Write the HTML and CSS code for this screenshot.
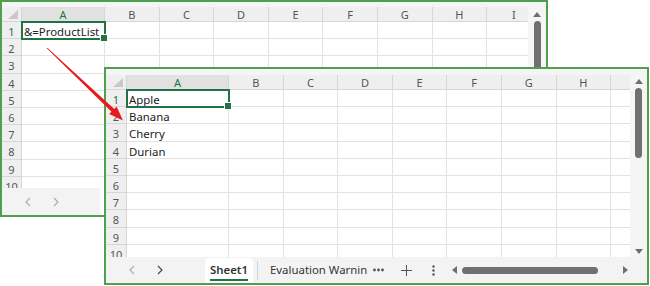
FILE: index.html
```html
<!DOCTYPE html>
<html lang="en">
<head>
    <meta charset="UTF-8">
    <meta name="viewport" content="width=device-width, initial-scale=1.0">
    <title>Product list template</title>
    <link rel="stylesheet" href="styles.css">
</head>
<body>
    <!-- template workbook -->
    <div class="win win-back">
        <div class="win-body">
            <div class="sheet">
                <div class="grid">
                    <div class="corner"><span class="tri"></span></div>
                    <div class="ch sel">A</div><div class="ch">B</div><div class="ch">C</div><div class="ch">D</div><div class="ch">E</div><div class="ch">F</div><div class="ch">G</div><div class="ch">H</div><div class="ch">I</div>
                    <div class="rh sel">1</div><div class="cell active">&amp;=ProductList</div><div></div><div></div><div></div><div></div><div></div><div></div><div></div><div></div>
                    <div class="rh">2</div><div></div><div></div><div></div><div></div><div></div><div></div><div></div><div></div><div></div>
                    <div class="rh">3</div><div></div><div></div><div></div><div></div><div></div><div></div><div></div><div></div><div></div>
                    <div class="rh">4</div><div></div><div></div><div></div><div></div><div></div><div></div><div></div><div></div><div></div>
                    <div class="rh">5</div><div></div><div></div><div></div><div></div><div></div><div></div><div></div><div></div><div></div>
                    <div class="rh">6</div><div></div><div></div><div></div><div></div><div></div><div></div><div></div><div></div><div></div>
                    <div class="rh">7</div><div></div><div></div><div></div><div></div><div></div><div></div><div></div><div></div><div></div>
                    <div class="rh">8</div><div></div><div></div><div></div><div></div><div></div><div></div><div></div><div></div><div></div>
                    <div class="rh">9</div><div></div><div></div><div></div><div></div><div></div><div></div><div></div><div></div><div></div>
                    <div class="rh">10</div><div></div><div></div><div></div><div></div><div></div><div></div><div></div><div></div><div></div>
                </div>
            </div>
            <div class="vscroll">
                <svg class="arr" width="8" height="5" viewBox="0 0 8 5"><polygon points="0,5 4,0 8,5"/></svg>
                <div class="vthumb"></div>
            </div>
        </div>
        <div class="tabbar">
            <div class="nav">
                <svg width="6" height="10" viewBox="0 0 6 10"><polyline points="5,1 1,5 5,9" class="chev off"/></svg>
                <svg width="6" height="10" viewBox="0 0 6 10"><polyline points="1,1 5,5 1,9" class="chev off"/></svg>
            </div>
            <div class="tab-blank"></div>
        </div>
    </div>

    <!-- generated result -->
    <div class="win win-front">
        <div class="win-body">
            <div class="sheet">
                <div class="grid">
                    <div class="corner"><span class="tri"></span></div>
                    <div class="ch sel">A</div><div class="ch">B</div><div class="ch">C</div><div class="ch">D</div><div class="ch">E</div><div class="ch">F</div><div class="ch">G</div><div class="ch">H</div><div class="ch"></div>
                    <div class="rh sel">1</div><div class="cell active">Apple</div><div></div><div></div><div></div><div></div><div></div><div></div><div></div><div></div>
                    <div class="rh">2</div><div class="cell">Banana</div><div></div><div></div><div></div><div></div><div></div><div></div><div></div><div></div>
                    <div class="rh">3</div><div class="cell">Cherry</div><div></div><div></div><div></div><div></div><div></div><div></div><div></div><div></div>
                    <div class="rh">4</div><div class="cell">Durian</div><div></div><div></div><div></div><div></div><div></div><div></div><div></div><div></div>
                    <div class="rh">5</div><div></div><div></div><div></div><div></div><div></div><div></div><div></div><div></div><div></div>
                    <div class="rh">6</div><div></div><div></div><div></div><div></div><div></div><div></div><div></div><div></div><div></div>
                    <div class="rh">7</div><div></div><div></div><div></div><div></div><div></div><div></div><div></div><div></div><div></div>
                    <div class="rh">8</div><div></div><div></div><div></div><div></div><div></div><div></div><div></div><div></div><div></div>
                    <div class="rh">9</div><div></div><div></div><div></div><div></div><div></div><div></div><div></div><div></div><div></div>
                    <div class="rh">10</div><div></div><div></div><div></div><div></div><div></div><div></div><div></div><div></div><div></div>
                </div>
            </div>
            <div class="vscroll">
                <svg class="arr" width="8" height="5" viewBox="0 0 8 5"><polygon points="0,5 4,0 8,5"/></svg>
                <div class="vthumb"></div>
                <div class="spacer"></div>
                <svg class="arr down" width="8" height="5" viewBox="0 0 8 5"><polygon points="0,0 8,0 4,5"/></svg>
            </div>
        </div>
        <div class="tabbar">
            <div class="nav">
                <svg width="6" height="10" viewBox="0 0 6 10"><polyline points="5,1 1,5 5,9" class="chev off"/></svg>
                <svg width="6" height="10" viewBox="0 0 6 10"><polyline points="1,1 5,5 1,9" class="chev"/></svg>
            </div>
            <div class="tab active-tab"><span>Sheet1</span></div>
            <div class="sep"></div>
            <div class="tab tab2">Evaluation Warnin</div>
            <div class="tool">
                <svg width="11" height="4" viewBox="0 0 11 4"><circle cx="1.5" cy="2" r="1.4"/><circle cx="5.5" cy="2" r="1.4"/><circle cx="9.5" cy="2" r="1.4"/></svg>
            </div>
            <div class="tool add">
                <svg width="11" height="11" viewBox="0 0 11 11"><path d="M5.5 0 V11 M0 5.5 H11" class="line"/></svg>
            </div>
            <div class="tool menu">
                <svg width="3" height="11" viewBox="0 0 3 11"><circle cx="1.5" cy="1.5" r="1.2"/><circle cx="1.5" cy="5.5" r="1.2"/><circle cx="1.5" cy="9.5" r="1.2"/></svg>
            </div>
            <div class="hscroll">
                <svg class="arr" width="5" height="8" viewBox="0 0 5 8"><polygon points="5,0 0,4 5,8"/></svg>
                <div class="hthumb"></div>
                <svg class="arr right" width="5" height="8" viewBox="0 0 5 8"><polygon points="0,0 5,4 0,8"/></svg>
            </div>
        </div>
    </div>

    <!-- pointer from the template cell to the result -->
    <svg class="pointer" width="650" height="286" viewBox="0 0 650 286">
        <polygon points="46.7,48.3 111.5,111.7 109.2,114.1 123,120.5 116.6,106.6 114.3,108.9 47.3,47.7"/>
    </svg>
</body>
</html>
```

FILE: styles.css
```css
* {
    box-sizing: border-box;
}
body {
    margin: 0;
    width: 650px;
    height: 286px;
    position: relative;
    overflow: hidden;
    background: #fff;
    font-family: "Noto Sans", "Open Sans", sans-serif;
    color: #222;
}

/* windows */
.win {
    position: absolute;
    display: flex;
    flex-direction: column;
    overflow: hidden;
    border: 2px solid #4f9f4f;
    background: #f5f5f5;
}
.win-back {
    left: 0;
    top: 0;
    width: 548px;
    height: 217px;
}
.win-front {
    left: 104px;
    top: 67px;
    width: 545px;
    height: 218px;
}
.win-body {
    flex: 1;
    display: flex;
    min-height: 0;
}
.sheet {
    flex: 1;
    min-width: 0;
    overflow: hidden;
}
.win-back .sheet {
    padding-top: 5px;
}
.win-front .sheet {
    padding-top: 6px;
}

/* grid */
.grid {
    display: grid;
    width: max-content;
    grid-template-rows: 15px;
    grid-auto-rows: 17.2px;
    background: #fff;
}
.win-back .grid {
    grid-template-columns: 20px 83px repeat(8, 54.6px);
}
.win-front .grid {
    grid-template-columns: 21px 102px repeat(8, 54.6px);
}
.grid > div {
    border-right: 1px solid #e2e2e2;
    border-bottom: 1px solid #e2e2e2;
    white-space: nowrap;
}
.corner {
    background: #efefef;
    display: flex;
    justify-content: flex-end;
    align-items: flex-end;
    padding: 0 3px 2px 0;
}
.grid > .corner,
.grid > .ch,
.grid > .rh {
    border-color: #d6d6d6;
}
.tri {
    width: 10px;
    height: 9px;
    background: #c9c9c9;
    clip-path: polygon(100% 0, 100% 100%, 0 100%);
}
.ch {
    background: #efefef;
    text-align: center;
    font-size: 11px;
    line-height: 15px;
    color: #555;
}
.rh {
    background: #efefef;
    text-align: center;
    font-size: 11px;
    line-height: 19px;
    color: #555;
    overflow: hidden;
}
.grid > .sel {
    background: #e1e1e1;
    color: #217346;
}
.grid > .rh.sel {
    background: #efefef;
}
.cell {
    font-size: 11.4px;
    line-height: 19px;
    padding-left: 2px;
}
.active {
    position: relative;
    outline: 2px solid #217346;
    outline-offset: -1px;
}
.active::after {
    content: "";
    position: absolute;
    right: -4px;
    bottom: -4px;
    width: 6px;
    height: 6px;
    background: #217346;
    border: 1px solid #fff;
}

/* vertical scrollbar */
.vscroll {
    width: 18px;
    display: flex;
    flex-direction: column;
    align-items: center;
    padding: 10px 0 3px;
}
.win-front .vscroll {
    width: 17px;
}
.arr {
    fill: #6f6f6f;
    flex: none;
}
.vthumb {
    width: 7px;
    height: 70px;
    margin-top: 4px;
    border-radius: 4px;
    background: #707070;
}
.spacer {
    flex: 1;
}

/* sheet tabs */
.tabbar {
    height: 26px;
    flex: none;
    display: flex;
    align-items: stretch;
    background: #f3f3f3;
    font-size: 11.4px;
    color: #333;
}
.win-back .tabbar {
    height: 27px;
}
.nav {
    width: 99px;
    display: flex;
    align-items: center;
    gap: 22px;
    padding-left: 23px;
}
.win-back .nav {
    width: 98px;
    border-top-right-radius: 4px;
}
.chev {
    fill: none;
    stroke: #444;
    stroke-width: 1.1;
}
.chev.off {
    stroke: #aaa;
}
.tab-blank {
    width: 40px;
    background: #fff;
}
.tab {
    display: flex;
    align-items: center;
    white-space: nowrap;
    overflow: hidden;
}
.active-tab {
    width: 48px;
    justify-content: center;
    background: #fff;
    border-radius: 4px 4px 0 0;
    margin-top: 1px;
}
.active-tab span {
    font-weight: 600;
    padding-bottom: 2px;
    border-bottom: 2px solid #217346;
    line-height: 15px;
    margin-top: 1px;
}
.sep {
    width: 1px;
    margin: 4px 0 3px 4px;
    background: #d4d4d4;
}
.tab2 {
    width: 110px;
    padding-left: 12px;
    padding-bottom: 2px;
}
.tool {
    width: 20px;
    display: flex;
    align-items: center;
    justify-content: center;
    fill: #555;
}
.tool.add {
    width: 36px;
}
.tool.menu {
    width: 18px;
}
.line {
    stroke: #555;
    stroke-width: 1;
}
.hscroll {
    flex: 1;
    display: flex;
    align-items: center;
    padding-left: 10px;
}
.hthumb {
    width: 136px;
    height: 7px;
    margin-left: 5px;
    border-radius: 4px;
    background: #707070;
}
.arr.right {
    margin-left: 25px;
}

/* red arrow */
.pointer {
    position: absolute;
    left: 0;
    top: 0;
    fill: #e61c1c;
}
```
